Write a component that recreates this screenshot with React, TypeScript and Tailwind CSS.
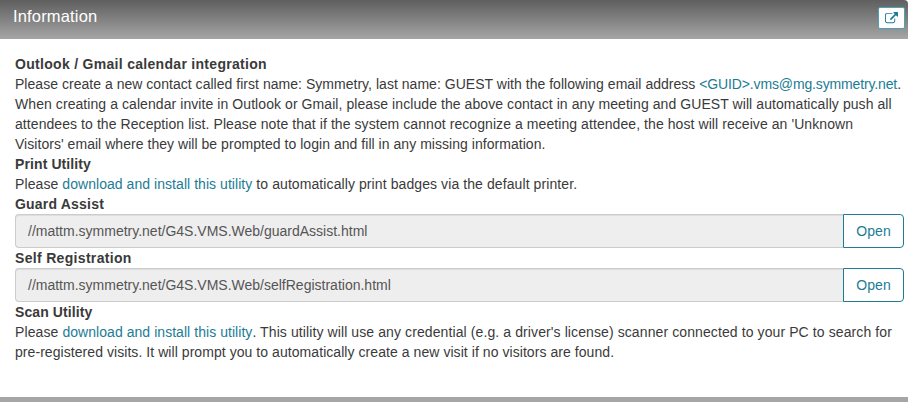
interface UrlFieldProps {
  label: string;
  url: string;
  labelClass: string;
}

function ExternalLinkIcon() {
  return (
    <svg width="13" height="13" viewBox="0 0 1792 1792" fill="currentColor">
      <path d="M1408 928v320q0 119-84.5 203.5t-203.5 84.5h-832q-119 0-203.5-84.5t-84.5-203.5v-832q0-119 84.5-203.5t203.5-84.5h704q14 0 23 9t9 23v64q0 14-9 23t-23 9h-704q-66 0-113 47t-47 113v832q0 66 47 113t113 47h832q66 0 113-47t47-113v-320q0-14 9-23t23-9h64q14 0 23 9t9 23zm384-864v512q0 26-19 45t-45 19-45-19l-176-176-652 652q-10 10-23 10t-23-10l-114-114q-10-10-10-23t10-23l652-652-176-176q-19-19-19-45t19-45 45-19h512q26 0 45 19t19 45z" />
    </svg>
  );
}

function UrlField({ label, url, labelClass }: UrlFieldProps) {
  return (
    <>
      <div className={`font-bold ${labelClass}`}>{label}</div>
      <div className="flex h-[34px]">
        <div className="flex-1 rounded-l border border-r-0 border-[#ccc] bg-[#eee] px-3 py-1.5 text-[#555] shadow-[inset_0_1px_1px_rgba(0,0,0,0.075)]">
          {url}
        </div>
        <button className="w-[61px] rounded-r border border-[#1c7c94] bg-white tracking-[0.1px] text-[#1c7c94]">Open</button>
      </div>
    </>
  );
}

function DownloadLink() {
  return <a className="tracking-[0.05px] text-[#1c7c94]">download and install this utility</a>;
}

export default function App() {
  return (
    <div className="flex h-[402px] w-[908px] flex-col overflow-hidden bg-white font-['Liberation_Sans',Arial,sans-serif] text-[14px] leading-[20px] text-[#3a3a3a]">
      <header className="flex h-[39px] shrink-0 justify-between rounded-tr-[4px] bg-linear-to-b from-[#5f5f5f] to-[#a6a6a6] pl-[13px] pr-[3px] text-white">
        <h1 className="pt-[6px] text-[16.5px] tracking-[0.16px]">Information</h1>
        <button className="mt-[7px] flex h-[22px] w-[27px] items-center justify-center rounded-[2px] border border-[#4ba3b3] bg-white text-[#1c7c94]">
          <ExternalLinkIcon />
        </button>
      </header>
      <main className="flex-1 pl-[15px] pr-1 pt-[15px]">
        <div className="font-bold tracking-[0.3px]">Outlook / Gmail calendar integration</div>
        <p className="whitespace-nowrap">
          <span className="tracking-[0.03px]">
            Please create a new contact called first name: Symmetry, last name: GUEST with the following email address{" "}
          </span>
          <a className="tracking-[-0.14px] text-[#1c7c94]">&lt;GUID&gt;.vms@mg.symmetry.net</a>.<br />
          <span className="tracking-[0.073px]">
            When creating a calendar invite in Outlook or Gmail, please include the above contact in any meeting and GUEST will automatically push all
          </span>
          <br />
          <span className="tracking-[0.072px]">
            attendees to the Reception list. Please note that if the system cannot recognize a meeting attendee, the host will receive an 'Unknown
          </span>
          <br />
          <span className="tracking-[0.04px]">
            Visitors' email where they will be prompted to login and fill in any missing information.
          </span>
        </p>
        <div className="font-bold tracking-[0.1px]">Print Utility</div>
        <p className="tracking-[0.09px]">
          Please <DownloadLink /> to automatically print badges via the default printer.
        </p>
        <UrlField label="Guard Assist" labelClass="tracking-[0.2px]" url="//mattm.symmetry.net/G4S.VMS.Web/guardAssist.html" />
        <UrlField
          label="Self Registration"
          labelClass="tracking-[0.32px]"
          url="//mattm.symmetry.net/G4S.VMS.Web/selfRegistration.html"
        />
        <div className="font-bold tracking-[0.1px]">Scan Utility</div>
        <p className="whitespace-nowrap tracking-[0.1px]">
          Please <DownloadLink />. This utility will use any credential (e.g. a driver's license) scanner connected to your PC to search for<br />
          <span className="tracking-[0.06px]">
            pre-registered visits. It will prompt you to automatically create a new visit if no visitors are found.
          </span>
        </p>
      </main>
      <div className="h-[5px] shrink-0 bg-[#a6a6a6]" />
    </div>
  );
}
